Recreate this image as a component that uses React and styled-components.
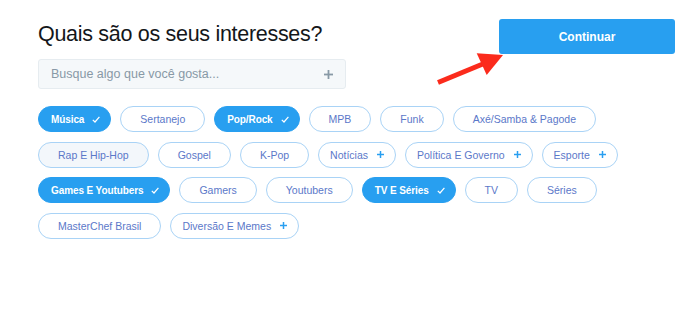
import React from "react";
import styled, { createGlobalStyle } from "styled-components";

const GlobalStyle = createGlobalStyle`
  html, body { margin: 0; padding: 0; background: #ffffff; }
  body { font-family: "Liberation Sans", Arial, sans-serif; -webkit-font-smoothing: antialiased; }
`;

const Page = styled.div`
  position: relative;
  width: 695px;
  height: 322px;
  box-sizing: border-box;
  padding: 19px 20px 0 38px;
  background: #ffffff;
`;

const Header = styled.div`
  display: flex;
  justify-content: space-between;
  align-items: flex-start;
`;

const LeftCol = styled.div`
  display: flex;
  flex-direction: column;
  width: 308px;
`;

const Title = styled.h1`
  margin: 1px 0 0 0;
  font-size: 21.5px;
  line-height: 28px;
  font-weight: 400;
  color: #14171a;
  letter-spacing: -0.3px;
  white-space: nowrap;
`;

const Search = styled.div`
  margin-top: 11px;
  height: 30px;
  box-sizing: border-box;
  display: flex;
  align-items: center;
  justify-content: space-between;
  padding: 0 12px 0 12px;
  background: #f5f8fa;
  border: 1px solid #e6ecf0;
  border-radius: 3px;
  color: #8899a6;
  font-size: 12.5px;
`;

const PrimaryButton = styled.button`
  width: 176px;
  height: 35px;
  border: none;
  border-radius: 3px;
  background: #289ff0;
  color: #ffffff;
  font-family: "Liberation Sans", Arial, sans-serif;
  font-weight: 700;
  font-size: 12px;
  padding: 0;
  cursor: pointer;
`;

const Tags = styled.div`
  margin-top: 17px;
  display: flex;
  flex-wrap: wrap;
  column-gap: 9px;
  row-gap: 9.5px;
  width: 637px;
`;

const Pill = styled.div`
  height: 26px;
  box-sizing: border-box;
  display: inline-flex;
  align-items: center;
  gap: ${(p) => (p.$selected ? "8px" : "9px")};
  border-radius: 13px;
  font-size: ${(p) => (p.$selected ? "10px" : "10.5px")};
  letter-spacing: ${(p) => (p.$selected ? "-0.1px" : "0")};
  white-space: nowrap;
  border: 1px solid ${(p) => (p.$selected ? "#289ff0" : "#a9d3f6")};
  background: ${(p) => (p.$selected ? "#289ff0" : p.$muted ? "#f3f7fb" : "#ffffff")};
  color: ${(p) => (p.$selected ? "#ffffff" : "#5b78c9")};
  font-weight: ${(p) => (p.$selected ? 700 : 400)};
  padding: ${(p) => (p.$selected ? "0 10px 0 12px" : p.$icon ? "0 11px" : "0 19px")};
`;

const Arrow = styled.svg`
  position: absolute;
  left: 430px;
  top: 48px;
  overflow: visible;
`;

const Check = () => (
  <svg width="8" height="7" viewBox="0 0 8 7">
    <polyline points="0.8,3.8 3,6 7.4,0.8" fill="none" stroke="#ffffff" strokeWidth="1.2" />
  </svg>
);

const Plus = ({ color = "#289ff0", size = 8, w = 1.6 }) => (
  <svg width={size} height={size} viewBox={`0 0 ${size} ${size}`}>
    <line x1={size / 2} y1="0" x2={size / 2} y2={size} stroke={color} strokeWidth={w} />
    <line x1="0" y1={size / 2} x2={size} y2={size / 2} stroke={color} strokeWidth={w} />
  </svg>
);

const tags = [
  { t: "Música", s: true },
  { t: "Sertanejo" },
  { t: "Pop/Rock", s: true },
  { t: "MPB" },
  { t: "Funk" },
  { t: "Axé/Samba & Pagode" },
  { t: "Rap E Hip-Hop", m: true },
  { t: "Gospel" },
  { t: "K-Pop" },
  { t: "Notícias", p: true },
  { t: "Política E Governo", p: true },
  { t: "Esporte", p: true },
  { t: "Games E Youtubers", s: true },
  { t: "Gamers" },
  { t: "Youtubers" },
  { t: "TV E Séries", s: true },
  { t: "TV" },
  { t: "Séries" },
  { t: "MasterChef Brasil" },
  { t: "Diversão E Memes", p: true },
];

export default function App() {
  return (
    <>
      <GlobalStyle />
      <Page>
        <Header>
          <LeftCol>
            <Title>Quais são os seus interesses?</Title>
            <Search>
              <span>Busque algo que você gosta...</span>
              <Plus color="#8899a6" size={9} w={1.8} />
            </Search>
          </LeftCol>
          <PrimaryButton>Continuar</PrimaryButton>
        </Header>
        <Tags>
          {tags.map((g) => (
            <Pill key={g.t} $selected={g.s} $muted={g.m} $icon={g.s || g.p}>
              <span>{g.t}</span>
              {g.s && <Check />}
              {g.p && <Plus size={7} w={1.5} />}
            </Pill>
          ))}
        </Tags>
        <Arrow width="80" height="40" viewBox="0 0 80 40">
          <line x1="8" y1="34.5" x2="54" y2="15.5" stroke="#fb2b1c" strokeWidth="5" />
          <polygon points="46.7,5.3 73,7 56.7,27" fill="#fb2b1c" />
        </Arrow>
      </Page>
    </>
  );
}
